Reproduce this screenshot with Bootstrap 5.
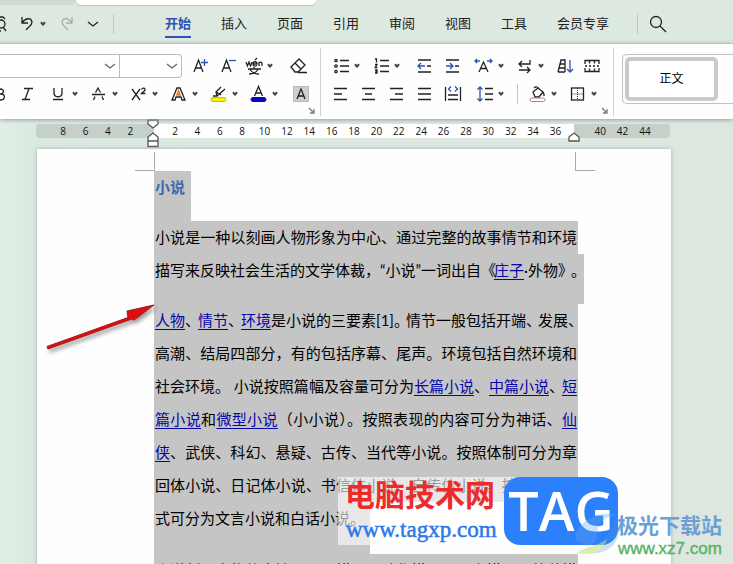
<!DOCTYPE html>
<html lang="zh-CN">
<head>
<meta charset="utf-8">
<meta name="viewport" content="width=device-width, initial-scale=1">
<title>小说</title>
<link href="https://cdn.jsdelivr.net/npm/bootstrap@5.3.0/dist/css/bootstrap.min.css" rel="stylesheet">
<style>
html,body{height:100%}
body{font-family:"Liberation Sans","Noto Sans CJK SC",sans-serif;font-size:13px;line-height:20px;color:#222;background:#dde8e0}
button{border:0;background:none;padding:0;color:inherit}
svg{display:block;fill:none;stroke:currentColor;stroke-width:1.3;overflow:visible}
.tabstrip{height:5px}
.tab-old{width:76px;background:#d0dad4;border-bottom-right-radius:6px}
.tab-cur{width:240px;background:#fff;border-radius:0 0 6px 6px;box-shadow:0 1px 1px #bcc8c0}
.menubar{height:38px}
.quick{width:113px}
.quick svg,.tool{width:24px;height:24px;flex:none}
.faded{color:#a5afa9}
.vr-line{width:1px;height:20px;background:#bcc8c1}
.menu-tabs{gap:30px;margin-left:51px}
.menu-tabs a{color:#222;text-decoration:none;white-space:nowrap;padding:4px 0 2px;border-bottom:2px solid transparent}
.menu-tabs a.active{color:#2f52b4;font-weight:700;border-color:#2f52b4}
.search-sep{margin-left:28px}
.ribbon{height:76px;background:#fdfefd;border-top:1px solid #bcc3bf;box-shadow:0 1px 4px #90a096;position:relative;z-index:2}
.group{border-right:1px solid #cfd3d1;height:68px;margin-top:4px;position:relative}
.g-font{width:321px}
.g-para{width:293px;padding-left:8px}
.tool-row{height:28px}
.row-one{margin-top:4px}
.split{width:40px;flex:none}
.caret{width:8px;height:24px}
.caret::after{content:"";display:block;width:4px;height:4px;margin:0 auto 2px;border:solid #444;border-width:0 2px 2px 0;transform:rotate(45deg)}
.launcher{position:absolute;right:4px;bottom:1px;width:8px;height:8px}
.launcher svg{stroke:#777}
.from-left{margin-left:-13px}
.combo{height:24px;border:1px solid #b9bcbb;background-color:#fff;border-radius:0;font-size:12px;color:#222;appearance:none;outline:0}
.combo-box{position:relative}
.combo-box svg{position:absolute;right:4px;top:6px;pointer-events:none;stroke:#666}
.c-name{width:120px;border-left:0}
.c-size{width:62px;border-left:0;border-radius:0 4px 4px 0}
.gallery{margin:6px 0 0 8px;height:50px;border:1px solid #bfc2c1;border-right:0;border-radius:5px 0 0 5px;padding:2px}
.style-card{width:93px;height:44px;border:4px solid #c9cbca;border-radius:5px;background:#fff;color:#000;font-size:12px}
.doc{position:relative;overflow:hidden;padding:5px 62px 0 37px;background:linear-gradient(90deg,#e1eee6,#d9e9df 5%,#dde8e0 30%,#dde7df)}
.ruler{position:relative;height:14px;margin:0 1px 11px -1px;padding:0 14px 0 16px;border-radius:4px;background:linear-gradient(#fff,#fff) 118px 0/calc(100% - 214px) 14px no-repeat #c4d0c9;font:10px/14px "Open Sans",sans-serif;color:#111}
.ruler span{flex:1 1 0;text-align:center}
.marker{position:absolute;width:12px;stroke:#555;fill:#fff}
.m-top{left:111px;top:-5px}
.m-bottom{left:111px;top:8px}
.m-right{right:90px;top:8px}
.paper{position:relative;background:#fefefe;padding:22px 93px 0 117px;box-shadow:0 0 4px #a5b1aa;min-height:430px;color:#000;font:15px/33px Lato,"Noto Sans CJK SC",sans-serif}
.corner{position:absolute;top:3px;width:20px;height:19px;border-bottom:1px solid #aaa}
.c-left{left:98px;border-right:1px solid #aaa}
.c-right{right:76px;border-left:1px solid #aaa}
.paper p{margin:0}
.ln{display:block;height:33px;white-space:nowrap;background:#c5c5c5;text-align:justify;text-align-last:justify;padding:0 1px}
.ln.end{height:50px;text-align-last:left}
.ln.over{margin-right:-6px}
.ln.short{width:216px;height:52px}
.pn{display:inline-block;width:12px;text-align:left;text-align-last:left}
.pn.wide{width:13px}
.paper a{color:#0505a8;text-decoration:underline;text-underline-offset:3px;text-decoration-thickness:1px}
.doc-title{font-size:15px;line-height:33px;font-weight:700;color:#3e6aad;width:37px;height:50px;background:#c5c5c5;margin:0;padding-left:1px;white-space:nowrap}
.pointer{position:absolute;left:40px;top:180px;z-index:3}
.stamp{position:absolute;z-index:3;white-space:nowrap}
.s-veil{left:338px;top:358px;width:280px;height:68px;background:#ffffff99}
.s-name{left:345px;top:360px;font-size:30px;line-height:34px;font-weight:700;color:#ee2b2b}
.s-url{left:346px;top:397px;font:23px/28px "Liberation Serif",serif;color:#2b78e8;-webkit-text-stroke:.5px #2b78e8}
.s-tag{left:504px;top:358px;width:114px;height:68px;border-radius:16px;background:#2d80fb;color:#fff;font:600 54px/66px "Open Sans",sans-serif;text-align:center}
.s-leaf{left:575px;top:394px;opacity:.6}
.s-site{left:617px;top:394px;font-size:21px;line-height:26px;font-weight:700;color:#6aa0d6}
.s-site2{left:618px;top:419px;font-size:17px;line-height:22px;color:#55b565;-webkit-text-stroke:.4px #55b565}
</style>
<script src="https://cdn.jsdelivr.net/npm/bootstrap@5.3.0/dist/js/bootstrap.bundle.min.js"></script>
</head>
<body class="d-flex flex-column overflow-hidden">
<header>
  <div class="tabstrip d-flex"><div class="tab-old"></div><div class="tab-cur"></div></div>
  <nav class="menubar d-flex align-items-center" aria-label="菜单">
    <div class="quick d-flex align-items-center flex-shrink-0">
      <button class="from-left" aria-label="打印预览"><svg width="24" height="24"><path d="M8 5h8l2 2M8 5v14h6"/><circle cx="14" cy="12" r="4"/><path d="M16 15l3 4"/></svg></button>
      <button class="ms-1" aria-label="撤销"><svg width="24" height="24"><path d="M7 5v6h6M7 11c3-5 9-6 10-1 0 4-4 5-6 8"/></svg></button>
      <button class="caret" aria-label="更多撤销"></button>
      <button class="ms-2 faded" aria-label="恢复"><svg width="24" height="24"><path d="M17 5v6h-6M17 11c-3-5-9-6-10-1 0 4 4 5 6 8"/></svg></button>
      <button aria-label="自定义"><svg width="24" height="24"><path d="M9 10l5 4 5-4"/></svg></button>
    </div>
    <div class="vr-line"></div>
    <div class="menu-tabs d-flex">
      <a class="active" href="#">开始</a><a href="#">插入</a><a href="#">页面</a><a href="#">引用</a><a href="#">审阅</a><a href="#">视图</a><a href="#">工具</a><a href="#">会员专享</a>
    </div>
    <div class="vr-line search-sep"></div>
    <button class="tool ms-2" aria-label="搜索"><svg width="24" height="24"><circle cx="10" cy="10" r="5.500"/><path d="M14 14l6 6"/></svg></button>
  </nav>
</header>
<section class="ribbon d-flex flex-shrink-0" aria-label="开始">
  <div class="group g-font flex-shrink-0">
    <div class="tool-row row-one d-flex align-items-center">
      <label class="combo-box"><input class="combo c-name" aria-label="字体"><svg width="12" height="12"><path d="M1 4l5 4 5-4"/></svg></label>
      <label class="combo-box"><input class="combo c-size" aria-label="字号"><svg width="12" height="12"><path d="M1 4l5 4 5-4"/></svg></label>
      <button class="tool ms-1" aria-label="增大字号"><svg width="24" height="24"><path d="M8 18l4.500-12L17 18M9.500 14h6"/><path style="stroke:#2f52b4" d="M15 8.500h7M18.500 5v7"/></svg></button>
      <button class="tool ms-1" aria-label="减小字号"><svg width="24" height="24"><path d="M8 18l4.500-12L17 18M9.500 14h6"/><path style="stroke:#2f52b4" d="M15 6.500h7"/></svg></button>
      <div class="split d-flex ms-1"><button class="tool" aria-label="拼音指南"><svg width="24" height="24"><path d="M4 8l1.500 4L7 8l1.500 4L10 8M11 10h4c0-3-4-3-4 0s3 2 4 1.500M13 6l2-2M17 12V8M17 9c1-1.500 3-1 3 .5V12M6 15h13M12 13v2M8 15c1 3 5 5 9 5M16 15c-1 3-5 5-9 5"/></svg></button><button class="caret" aria-label="更多拼音"></button></div>
      <button class="tool ms-1" aria-label="清除格式"><svg width="24" height="24"><path d="M5 13l8-8 6 6-7 7H9zM9 9l6 6M12 18.500h9"/></svg></button>
    </div>
    <div class="tool-row from-left d-flex align-items-center">
      <button class="tool" aria-label="加粗"><svg width="24" height="24" stroke-width="2"><path d="M9 7h4c5 0 4 5 0 5H9zM9 12h5c5 0 4 6 0 6H9z"/></svg></button>
      <button class="tool ms-1" aria-label="倾斜"><svg width="24" height="24"><path d="M9 6.500h9M7 17.500h8M14 6.500l-4 11"/></svg></button>
      <div class="split d-flex ms-2"><button class="tool" aria-label="下划线"><svg width="24" height="24"><path d="M7 6v5c0 5 8 5 8 0V6M6 17.500h10"/></svg></button><button class="caret" aria-label="更多下划线"></button></div>
      <div class="split d-flex"><button class="tool" aria-label="删除线"><svg width="24" height="24"><path d="M8.500 10.500L11 6l2.500 4.500M5 12.500h13M8 14.500L6.500 18M15 14.500l1.500 3.500"/></svg></button><button class="caret" aria-label="更多删除线"></button></div>
      <div class="split d-flex"><button class="tool" aria-label="上标"><svg width="24" height="24"><path d="M5 7l8 11M13 7L5 18M14.500 7.500c1-2 4-1.500 3.500.5-.3 1-2 2-3.500 3.500h4"/></svg></button><button class="caret" aria-label="更多上标"></button></div>
      <div class="split d-flex"><button class="tool" aria-label="文字效果"><svg width="24" height="24"><path d="M5 18L10 6h3l5 12h-3l-1-3h-5l-1 3z"/><path style="stroke:#d87832;stroke-width:1.6" d="M10 13l1.500-4 1.500 4z"/></svg></button><button class="caret" aria-label="更多文字效果"></button></div>
      <div class="split d-flex"><button class="tool" aria-label="突出显示"><svg width="24" height="24"><path d="M6 14h4l8-7M10 14l-1-4 5-5M9 10l5 3"/><rect x="4" y="15.500" width="15" height="4" rx="2" style="fill:#f8f400;stroke:#c6c100;stroke-width:1"/></svg></button><button class="caret" aria-label="突出显示颜色"></button></div>
      <div class="split d-flex"><button class="tool" aria-label="字体颜色"><svg width="24" height="24"><path d="M7.500 14L11.500 4.500 15.500 14M9 11h5"/><rect x="4" y="15.500" width="15" height="4" rx="2" style="fill:#0808c4;stroke:#0808c4;stroke-width:1"/></svg></button><button class="caret" aria-label="选择字体颜色"></button></div>
      <button class="tool ms-1" aria-label="字符底纹"><svg width="24" height="24"><rect x="2.500" y="4.500" width="15" height="15" style="fill:#cfcfcf;stroke:#bbb;stroke-width:1"/><path d="M6 17L10 7l4 10M7.500 14h5"/></svg></button>
    </div>
    <button class="launcher" aria-label="字体设置"><svg width="8" height="8"><path d="M1 1l4 4M6 2v4H2"/></svg></button>
  </div>
  <div class="group g-para flex-shrink-0">
    <div class="tool-row row-one d-flex align-items-center">
      <div class="split d-flex"><button class="tool" aria-label="项目符号"><svg width="24" height="24"><path d="M11 6.500h9M11 12h9M11 17.500h9"/><circle cx="7" cy="6.500" r="1.200"/><circle cx="7" cy="12" r="1.200"/><circle cx="7" cy="17.500" r="1.200"/></svg></button><button class="caret" aria-label="更多符号"></button></div>
      <div class="split d-flex"><button class="tool" aria-label="编号"><svg width="24" height="24"><path d="M11 6.500h9M11 12h9M11 17.500h9M6 5h1.500v3.500M6 10.500h2L6.200 13.500H8.500M6 16h2v3H6M6.500 17.500H8"/></svg></button><button class="caret" aria-label="更多编号"></button></div>
      <button class="tool ms-1" aria-label="减少缩进"><svg width="24" height="24"><path d="M5 6h13M14 12h4M5 18h13"/><path style="stroke:#2f52b4" d="M12 12H5M8 9l-3 3 3 3"/></svg></button>
      <button class="tool ms-1" aria-label="增加缩进"><svg width="24" height="24"><path d="M5 6h13M14 12h4M5 18h13"/><path style="stroke:#2f52b4" d="M5 12h7M9 9l3 3-3 3"/></svg></button>
      <div class="split d-flex ms-2"><button class="tool" aria-label="字符缩放"><svg width="24" height="24"><path d="M6 18l4.500-10 4.500 10M8 14.500h5"/><path style="stroke:#2f52b4" d="M7 7H2M4 5L2 7l2 2M14 7h5M17 5l2 2-2 2"/></svg></button><button class="caret" aria-label="更多缩放"></button></div>
      <div class="split d-flex"><button class="tool" aria-label="换行"><svg width="24" height="24"><path d="M17 6v4H6M9 7l-3 3 3 3M6 16h11M14 13l3 3-3 3"/></svg></button><button class="caret" aria-label="更多换行"></button></div>
      <button class="tool" aria-label="排序"><svg width="24" height="24"><path d="M5 18L8 6h4v12M5 18h7M6 14h6M7 10h5"/><path style="stroke:#2f52b4" d="M17 6v12M14 15l3 3 3-3"/></svg></button>
      <button class="tool ms-1" aria-label="制表位"><svg width="24" height="24"><path d="M4 10V6.500h14V10M4 14v3.500h14V14M8.500 6.500v3M13.500 6.500v3M8.500 14.500v3M13.500 14.500v3M4 12h2M8 12h2M12 12h2M16 12h2"/></svg></button>
    </div>
    <div class="tool-row d-flex align-items-center">
      <button class="tool" aria-label="左对齐"><svg width="24" height="24"><path d="M5 6.500h13M5 12h8M5 17.500h13"/></svg></button>
      <button class="tool ms-1" aria-label="居中"><svg width="24" height="24"><path d="M5 6.500h13M8 12h7M5 17.500h13"/></svg></button>
      <button class="tool ms-1" aria-label="右对齐"><svg width="24" height="24"><path d="M5 6.500h13M10 12h8M5 17.500h13"/></svg></button>
      <button class="tool ms-1" aria-label="两端对齐"><svg width="24" height="24"><path d="M5 6.500h13M5 12h13M5 17.500h13"/></svg></button>
      <button class="tool ms-1" aria-label="分散对齐"><svg width="24" height="24"><path d="M4.500 5v14M19.500 5v14M7 13h10M7 17.500h10"/><path style="stroke:#2f52b4" d="M10 4.500L7.500 7 10 9.500M14 4.500L16.500 7 14 9.500"/></svg></button>
      <div class="split d-flex ms-2"><button class="tool" aria-label="行距"><svg width="24" height="24"><path d="M12 6.500h8M12 12h8M12 17.500h8"/><path style="stroke:#2f52b4" d="M7 5v14M4.500 7.500L7 5l2.500 2.500M4.500 16.500L7 19l2.500-2.500"/></svg></button><button class="caret" aria-label="更多行距"></button></div>
      <div class="vr-line ms-1 me-2"></div>
      <div class="split d-flex"><button class="tool" aria-label="底纹颜色"><svg width="24" height="24"><path d="M8 6c2-2 4-1 5 1M7 10l5-4 5 4-4 5H9zM17 10c1.500 2 1 3 1 4"/><rect x="4" y="16" width="15" height="3.500" rx="1.700" style="stroke:#b08484;stroke-width:1"/></svg></button><button class="caret" aria-label="更多底纹"></button></div>
      <div class="split d-flex"><button class="tool" aria-label="边框"><svg width="24" height="24"><rect x="5.500" y="6" width="12" height="12"/><path style="stroke-width:1;stroke-dasharray:1 1" d="M11.500 6v12M5.500 12h12"/></svg></button><button class="caret" aria-label="更多边框"></button></div>
    </div>
    <button class="launcher" aria-label="段落设置"><svg width="8" height="8"><path d="M1 1l4 4M6 2v4H2"/></svg></button>
  </div>
  <div class="flex-grow-1 pt-1"><div class="gallery"><button class="style-card">正文</button></div></div>
</section>
<main class="doc flex-grow-1">
  <div class="ruler d-flex">
    <span>8</span><span>6</span><span>4</span><span>2</span><span></span><span>2</span><span>4</span><span>6</span><span>8</span><span>10</span><span>12</span><span>14</span><span>16</span><span>18</span><span>20</span><span>22</span><span>24</span><span>26</span><span>28</span><span>30</span><span>32</span><span>34</span><span>36</span><span></span><span>40</span><span>42</span><span>44</span>
    <svg class="marker m-top" width="12" height="10"><path d="M1 1h10v4L6 9 1 5z"/></svg>
    <svg class="marker m-bottom" width="12" height="16"><path d="M1 9V5l5-4 5 4v4zM1 9h10v5.500H1z"/></svg>
    <svg class="marker m-right" width="12" height="10"><path d="M1 9V5l5-4 5 4v4z"/></svg>
  </div>
  <article class="paper">
    <span class="corner c-left"></span><span class="corner c-right"></span>
    <h1 class="doc-title">小说</h1>
    <p><span class="ln">小说是一种以刻画人物形象为中心、通过完整的故事情节和环境</span><span class="ln over end">描写来反映社会生活的文学体裁，“小说”一词出自<span class="pn wide">《</span><a href="#">庄子</a>·外物<span class="pn wide">》</span><span class="pn">。</span></span></p>
    <p><span class="ln"><a href="#">人物</a><span class="pn wide">、</span><a href="#">情节</a><span class="pn wide">、</span><a href="#">环境</a>是小说的三要素[1]<span class="pn">。</span>情节一般包括开端<span class="pn">、</span>发展<span class="pn">、</span></span><span class="ln">高潮、结局四部分，有的包括序幕、尾声。环境包括自然环境和</span><span class="ln">社会环境。 小说按照篇幅及容量可分为<a href="#">长篇小说</a>、<a href="#">中篇小说</a><span class="pn wide">、</span><a href="#">短</a></span><span class="ln"><a href="#">篇小说</a>和<a href="#">微型小说</a>（小小说）。按照表现的内容可分为神话、<a href="#">仙</a></span><span class="ln"><a href="#">侠</a>、武侠、科幻、悬疑、古传、当代等小说。按照体制可分为章</span><span class="ln">回体小说、日记体小说、书信体小说、自传体小说。按照语言形</span><span class="ln end short">式可分为文言小说和白话小说。</span></p>
    <p><span class="ln">小说刻画人物的方法：心理描写、动作描写、语言描写、外貌描</span></p>
  </article>
  <svg class="pointer" width="120" height="60" style="stroke:none;filter:drop-shadow(2px 3px 2px #0006)"><path d="M7 47.500L88 18.500 87 12l27-6-20 15-2-1L8 50z" fill="#dc1010" stroke="#a91515" stroke-width="1"/></svg>
  <div class="stamp s-veil"></div>
  <div class="stamp s-name">电脑技术网</div>
  <div class="stamp s-url">www.tagxp.com</div>
  <div class="stamp s-tag">TAG</div>
  <svg class="stamp s-leaf" width="46" height="44" style="stroke:none"><path d="M0 22C8 4 26-2 42 2 28 4 22 12 22 22 22 32 10 36 8 30 2 30 0 26 0 22z" fill="#62a8e8" opacity=".55"/><path d="M4 38C20 36 34 26 42 6c6 16-2 32-20 34-8 1-14 0-18-2z" fill="#4b93d8" opacity=".45"/><path d="M2 40c10-8 20-6 30-14-4 12-16 18-30 14z" fill="#c4e37d" opacity=".9"/></svg>
  <div class="stamp s-site">极光下载站</div>
  <div class="stamp s-site2">www.xz7.com</div>
</main>
</body>
</html>
